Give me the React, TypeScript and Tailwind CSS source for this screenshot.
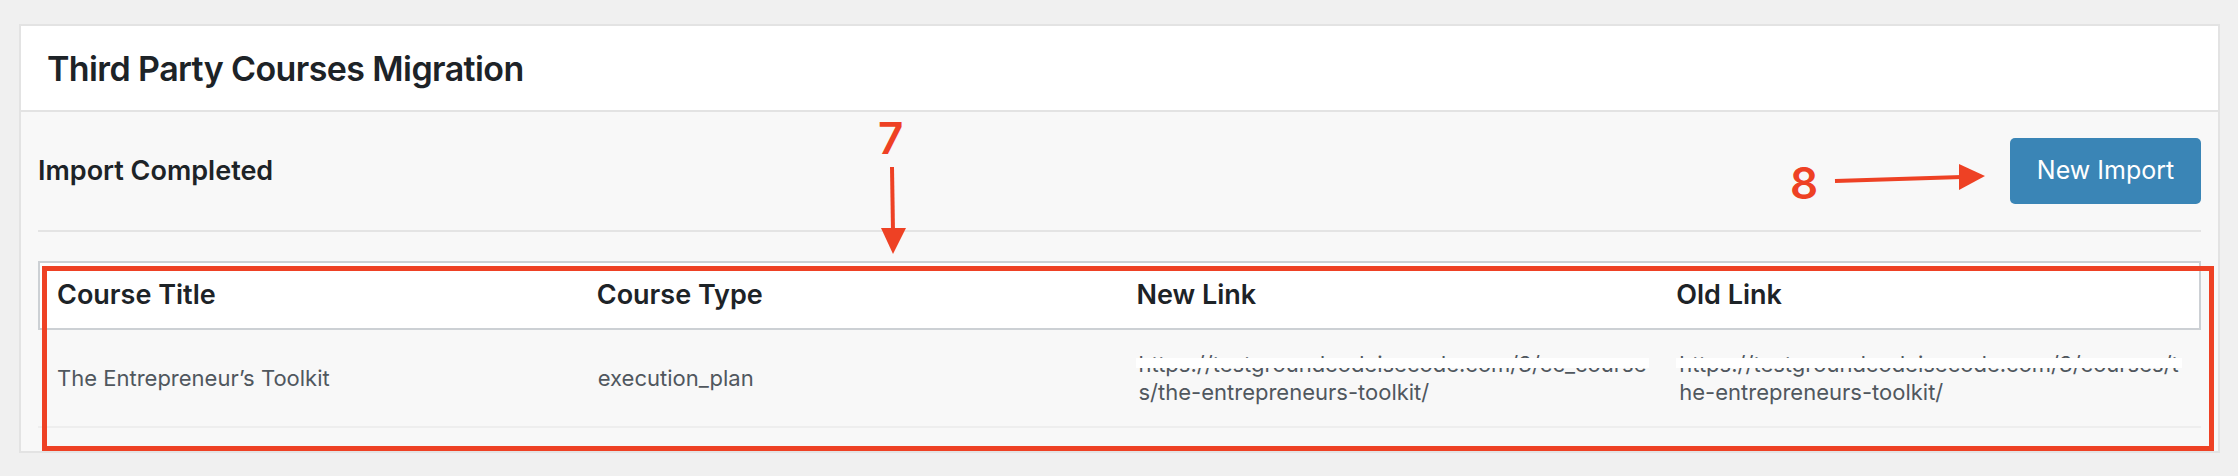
const rows = [
  {
    title: "The Entrepreneur’s Toolkit",
    type: "execution_plan",
    newLink: ["https://testgroundcodeisecode.com/3/cc_course", "s/the-entrepreneurs-toolkit/"],
    oldLink: ["https://testgroundcodeisecode.com/3/courses/t", "he-entrepreneurs-toolkit/"],
  },
];

// first line of each link is hidden behind a white strip in the screenshot
const LinkCell = ({ lines }: { lines: string[] }) => (
  <div className="flex flex-col leading-[28px] whitespace-nowrap">
    <span className="relative self-start">
      {lines[0]}
      <span className="absolute left-[-3px] right-[-3px] top-[8px] h-[10px] bg-white" />
    </span>
    <span>{lines[1]}</span>
  </div>
);

const Annotations = () => (
  <div className="pointer-events-none absolute inset-0">
    <svg width="2238" height="476" className="absolute left-0 top-0">
      <rect x="44.5" y="268.5" width="2167" height="180" fill="none" stroke="#ee4124" strokeWidth="5" />
      <line x1="892" y1="167" x2="893" y2="232" stroke="#ee4124" strokeWidth="4" />
      <polygon points="881,228 906,228 893,254" fill="#ee4124" />
      <line x1="1835" y1="181" x2="1962" y2="177" stroke="#ee4124" strokeWidth="4" />
      <polygon points="1959,164 1985,176 1959,190" fill="#ee4124" />
    </svg>
    <span className="absolute left-[878px] top-[116px] text-[44px] leading-none font-semibold text-[#ee4124]">7</span>
    <span className="absolute left-[1790px] top-[161px] text-[44px] leading-none font-semibold text-[#ee4124]">8</span>
  </div>
);

export default function App() {
  return (
    <div
      className="relative h-[476px] w-[2238px] bg-[#f0f0f0] pt-[24px] pl-[19px] pr-[18px]"
      style={{ fontFamily: "Inter, 'Noto Sans', sans-serif" }}
    >
      <div className="border-2 border-[#e3e3e3] bg-[#f8f8f8]">
        <div className="flex h-[86px] items-center border-b-2 border-[#e3e3e3] bg-white pl-[26px]">
          <h1 className="text-[34px] font-semibold tracking-[-0.6px] text-[#1d2327]">Third Party Courses Migration</h1>
        </div>

        <div className="px-[17px] pb-[23px]">
          <div className="flex items-center justify-between border-b-2 border-[#e4e4e4] py-[26px]">
            <h2 className="text-[27px] font-semibold text-[#1d2327]">Import Completed</h2>
            <button className="h-[66px] w-[191px] rounded-[5px] bg-[#3a85b6] text-[25px] text-white">New Import</button>
          </div>

          <div className="mt-[29px]">
            <div className="grid h-[69px] grid-cols-4 items-center border-2 border-[#ccd0d4] bg-white text-[27px] font-semibold text-[#1d2327]">
              <div className="pl-[17px]">Course Title</div>
              <div className="pl-[17px]">Course Type</div>
              <div className="pl-[17px]">New Link</div>
              <div className="pl-[17px]">Old Link</div>
            </div>
            {rows.map((row) => (
              <div
                key={row.title}
                className="grid h-[98px] grid-cols-4 items-center border-b-2 border-[#eeeeee] text-[22px] text-[#50575e]"
              >
                <div className="pl-[19px]">{row.title}</div>
                <div className="pl-[19px]">{row.type}</div>
                <div className="pl-[19px]">
                  <LinkCell lines={row.newLink} />
                </div>
                <div className="pl-[19px]">
                  <LinkCell lines={row.oldLink} />
                </div>
              </div>
            ))}
          </div>
        </div>
      </div>
      <Annotations />
    </div>
  );
}
